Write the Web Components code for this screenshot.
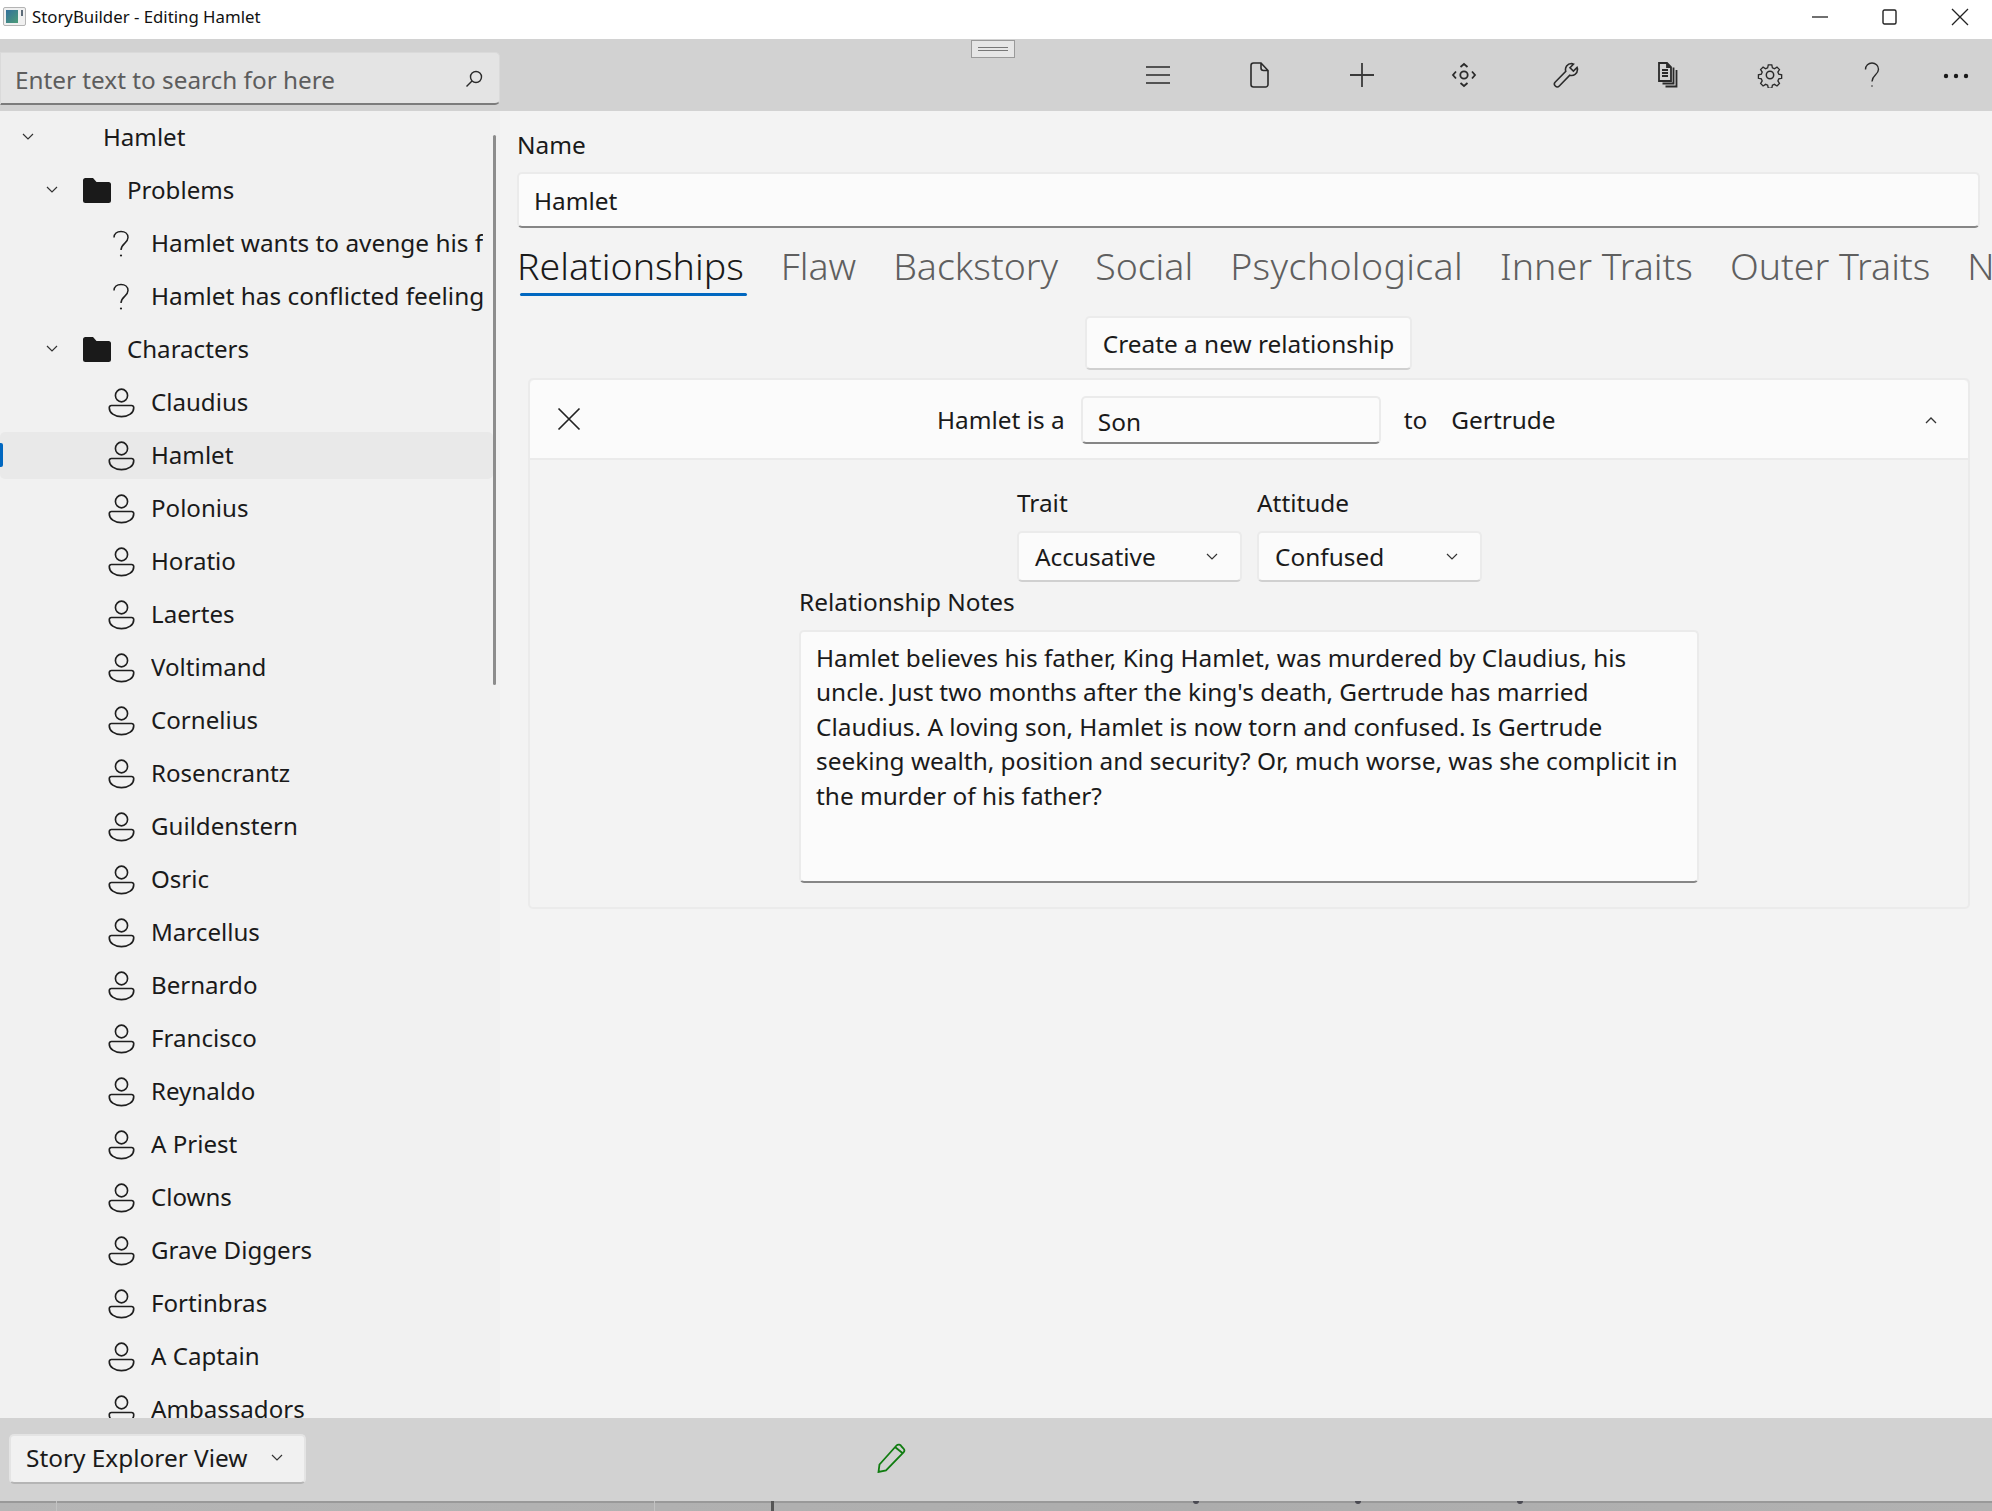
<!DOCTYPE html>
<html>
<head>
<meta charset="utf-8">
<title>StoryBuilder</title>
<style>
  html, body { margin: 0; height: 100%; overflow: hidden; background: #f3f3f3; }
  body { font-family: "Noto Sans", "Open Sans", sans-serif; color: #1a1a1a; }
</style>
</head>
<body>
<story-app></story-app>
<script>
(function initStoryBuilder() {
  const FONT = `"Noto Sans", "Open Sans", sans-serif`;
  const CHEVRON_DOWN = `<svg width="14" height="9" viewBox="0 0 14 9" fill="none" stroke="currentColor" stroke-width="1.2"><path d="M2 2l5 5 5-5"/></svg>`;

  const ICONS = {
    menu: `<svg width="26" height="26" viewBox="0 0 26 26" stroke="#2a2a2a" stroke-width="1.6"><path d="M1 5h24M1 13h24M1 21h24"/></svg>`,
    file: `<svg width="26" height="26" viewBox="0 0 26 26" fill="none" stroke="#2a2a2a" stroke-width="1.6"><path d="M6.5 1h7.5l7 7.5v14a2.5 2.5 0 0 1-2.5 2.5h-12A2.5 2.5 0 0 1 4 22.5V3.5A2.5 2.5 0 0 1 6.5 1zM14 1.5v4.5a2.5 2.5 0 0 0 2.5 2.5h4"/></svg>`,
    plus: `<svg width="26" height="26" viewBox="0 0 26 26" stroke="#3a3a3a" stroke-width="1.8"><path d="M1 13h24M13 1v24"/></svg>`,
    move: `<svg width="26" height="26" viewBox="0 0 26 26" fill="none" stroke="#2a2a2a" stroke-width="1.8"><circle cx="13" cy="13" r="3.7"/><path d="M9.5 5l3.5-3 3.5 3M9.5 21l3.5 3 3.5-3M5 9.5L2 13l3 3.5M21 9.5l3 3.5-3 3.5"/></svg>`,
    wrench: `<svg width="26" height="26" viewBox="0 0 26 26" fill="none" stroke="#2a2a2a" stroke-width="1.6"><path d="M18.5 1.5a6 6 0 0 0-5.7 7.9L2.3 20a2.8 2.8 0 0 0 4 4L16.8 13.2A6 6 0 0 0 24.5 7.5a6 6 0 0 0-.4-2l-3.7 3.6-3.4-3.3 3.6-3.7a6 6 0 0 0-2.1-.6z"/></svg>`,
    docs: `<svg width="26" height="26" viewBox="0 0 26 26" fill="none" stroke="#2a2a2a" stroke-width="1.8"><path d="M4 1h8l4 4v14H4zM12 1v4h4M7 8h6M7 11h6M7 14h6M18.5 5.5V21.5H7.5M21.5 8V24.5H10.5"/></svg>`,
    gear: `<svg width="26" height="26" viewBox="0 0 26 26" fill="none" stroke="#2a2a2a" stroke-width="1.5"><circle cx="13" cy="13" r="3.7"/><path d="M11 1.5h4l.7 3.3 2.3 1 2.9-1.800 2.800 2.800-1.800 2.900 1 2.300 3.300.7v4l-3.300.7-1 2.300 1.800 2.900-2.800 2.800-2.900-1.800-2.300 1-.7 3.300h-4l-.7-3.300-2.300-1-2.900 1.800-2.800-2.800 1.800-2.900-1-2.300-3.300-.7v-4l3.300-.7 1-2.300-1.800-2.900 2.800-2.800 2.900 1.800 2.300-1z" transform="translate(1.6 1.6) scale(.88)"/></svg>`,
    help: `<svg width="26" height="26" viewBox="0 0 26 26" fill="none" stroke="#2a2a2a" stroke-width="1.4"><path d="M6.5 7.5C6.5 3.5 9.5 1 13 1s6.5 2.6 6.5 6.2c0 5.8-6.5 6-6.5 12.3"/><circle cx="13" cy="24" r=".8" fill="#2a2a2a" stroke="none"/></svg>`,
    more: `<svg width="26" height="26" viewBox="0 0 26 26" fill="#1a1a1a"><circle cx="3" cy="14" r="2.2"/><circle cx="13" cy="14" r="2.2"/><circle cx="23" cy="14" r="2.2"/></svg>`
  };

  const TREE_ICONS = {
    folder: `<svg width="28" height="25" viewBox="0 0 28 25" fill="#1a1a1a"><path d="M2.5 0h7.500l3.500 4h12a2.500 2.500 0 0 1 2.500 2.500V22.500A2.500 2.500 0 0 1 25.500 25h-23A2.500 2.500 0 0 1 0 22.500V2.500A2.500 2.500 0 0 1 2.500 0z"/></svg>`,
    person: `<svg width="27" height="30" viewBox="0 0 28 30" preserveAspectRatio="none" fill="none" stroke="#1f1f1f" stroke-width="1.7"><circle cx="14" cy="7.5" r="6.3"/><path d="M3.5 17.5h21a2.2 2.2 0 0 1 2.2 2.2c0 5.200-5.500 9-12.700 9s-12.700-3.800-12.700-9a2.200 2.200 0 0 1 2.200-2.200z"/></svg>`,
    problem: `<svg width="28" height="28" viewBox="0 0 28 28" fill="none" stroke="#1f1f1f" stroke-width="1.5"><path d="M7 7.5C7 3.6 10 1.5 14 1.5s7 2.4 7 6c0 5.8-7 6-7 12.500"/><circle cx="14" cy="25.5" r="1.1" fill="#1f1f1f" stroke="none"/></svg>`
  };

  class TitleBar extends HTMLElement {
    constructor() {
      super();
      this.attachShadow({ mode: "open" });
      this.shadowRoot.innerHTML = `
        <style>
          :host { display: flex; align-items: center; box-sizing: border-box; height: 39px; padding-bottom: 6px; background: #fff; font: 16.8px ${FONT}; color: #111; }
          .app-icon { width: 23px; height: 19px; margin: 0 6px 0 3px; border: 1px solid #b4b4b4; border-radius: 2px; box-sizing: border-box; background: linear-gradient(135deg, #33709c, #4c9c78) 2px 2px / 12px 13px no-repeat, linear-gradient(#5c6b78, #5c6b78) 17px 2px / 2px 6px no-repeat, #f0f0f0; }
          .title { flex: 1; }
          .ctrl { width: 70px; display: flex; align-items: center; justify-content: center; }
        </style>
        <div class="app-icon"></div>
        <div class="title"><slot></slot></div>
        <div class="ctrl"><svg width="16" height="16" viewBox="0 0 16 16" stroke="#222" stroke-width="1.3"><path d="M0 8h16"/></svg></div>
        <div class="ctrl"><svg width="16" height="16" viewBox="0 0 16 16" fill="none" stroke="#222" stroke-width="1.4"><rect x="1" y="1" width="13" height="14" rx="1.5"/></svg></div>
        <div class="ctrl" style="margin-right:-3px"><svg width="18" height="18" viewBox="0 0 18 18" stroke="#222" stroke-width="1.3"><path d="M1 1l16 16M17 1L1 17"/></svg></div>
      `;
    }
  }
  customElements.define("title-bar", TitleBar);

  class ToolButton extends HTMLElement {
    constructor() {
      super();
      this.attachShadow({ mode: "open" });
      this.shadowRoot.innerHTML = `
        <style>
          :host { display: flex; width: 102px; height: 72px; align-items: center; justify-content: center; }
          :host([last]) { width: 66px; margin-right: 3px; }
        </style>
        ${ICONS[this.getAttribute("icon")] || ""}
      `;
    }
  }
  customElements.define("tool-button", ToolButton);

  class SearchBox extends HTMLElement {
    constructor() {
      super();
      this.attachShadow({ mode: "open" });
      this.shadowRoot.innerHTML = `
        <style>
          :host { display: flex; align-items: center; justify-content: space-between; box-sizing: border-box; width: 500px; height: 53px; padding: 2px 16px 0 14px; background: #e4e4e4; border: 1px solid #dadada; border-bottom: 2px solid #7c7c7c; border-radius: 0 5px 5px 0; font-size: 24.3px; color: #5d5d5d; }
        </style>
        <span>${this.getAttribute("placeholder")}</span>
        <svg width="18" height="18" viewBox="0 0 18 18" fill="none" stroke="#2a2a2a" stroke-width="1.4"><circle cx="11" cy="7" r="5.5"/><path d="M7 11l-5.5 5.5"/></svg>
      `;
    }
  }
  customElements.define("search-box", SearchBox);

  class TreeItem extends HTMLElement {
    constructor() {
      super();
      this.attachShadow({ mode: "open" });
      const level = Number(this.getAttribute("level") || 0);
      const icon = this.getAttribute("icon");
      const expand = this.hasAttribute("expandable");
      this.shadowRoot.innerHTML = `
        <style>
          :host { display: block; box-sizing: border-box; height: 53px; padding: 3px 0; }
          .row { position: relative; display: flex; align-items: center; height: 47px; border-radius: 5px; font-size: 24.1px; color: #1a1a1a; white-space: nowrap; overflow: hidden; padding-left: ${level * 24}px; }
          :host([icon="problem"]) .row { font-size: 24.4px; }
          :host([selected]) .row { background: #e9e9e9; }
          :host([selected]) .row::before { content: ""; position: absolute; left: 0; top: 11px; width: 3px; height: 24px; background: #0067c0; border-radius: 0 2px 2px 0; }
          .chev { width: 56px; flex: none; display: flex; justify-content: center; color: #333; padding-bottom: 3px; }
          .icon { width: 28px; height: 30px; flex: none; display: flex; align-items: center; justify-content: center; margin-right: 16px; margin-left: 3px; }
          .icon.none { visibility: hidden; }
          .text { flex: 1; min-width: 0; overflow: hidden; margin-right: 10px; padding-bottom: 2px; }
        </style>
        <div class="row">
          <div class="chev">${expand ? CHEVRON_DOWN : ""}</div>
          <div class="icon ${icon ? "" : "none"}">${TREE_ICONS[icon] || ""}</div>
          <div class="text"><slot></slot></div>
        </div>
      `;
    }
  }
  customElements.define("tree-item", TreeItem);

  class TreePane extends HTMLElement {
    constructor() {
      super();
      this.attachShadow({ mode: "open" });
      this.shadowRoot.innerHTML = `
        <style>
          :host { display: block; position: relative; width: 500px; background: #f1f1f1; overflow: hidden; }
          .list { width: 493px; }
          .thumb { position: absolute; left: 493px; top: 24px; width: 3px; height: 550px; border-radius: 2px; background: #8c8c8c; }
        </style>
        <div class="list"><slot></slot></div>
        <div class="thumb"></div>
      `;
    }
  }
  customElements.define("tree-pane", TreePane);

  class FieldBox extends HTMLElement {
    constructor() {
      super();
      this.attachShadow({ mode: "open" });
      this.shadowRoot.innerHTML = `
        <style>
          :host { display: flex; align-items: center; box-sizing: border-box; padding: 0 15px; background: #fbfbfb; border: 2px solid #ebebeb; border-bottom: 2px solid #868686; border-radius: 5px; font-size: 24.4px; color: #1a1a1a; }
        </style>
        <slot></slot>
      `;
    }
  }
  customElements.define("field-box", FieldBox);

  class ComboBox extends HTMLElement {
    constructor() {
      super();
      this.attachShadow({ mode: "open" });
      this.shadowRoot.innerHTML = `
        <style>
          :host { display: flex; align-items: center; justify-content: space-between; box-sizing: border-box; height: 51px; padding: 0 21px 0 16px; background: #fbfbfb; border: 2px solid #ebebeb; border-bottom-color: #d0d0d0; border-radius: 5px; font-size: 24.4px; color: #1a1a1a; }
          .chev { display: flex; color: #333; }
        </style>
        <span><slot></slot></span><span class="chev">${CHEVRON_DOWN}</span>
      `;
    }
  }
  customElements.define("combo-box", ComboBox);

  class TabStrip extends HTMLElement {
    constructor() {
      super();
      this.attachShadow({ mode: "open" });
      const tabs = ["Relationships", "Flaw", "Backstory", "Social", "Psychological", "Inner Traits", "Outer Traits", "N"];
      this.shadowRoot.innerHTML = `
        <style>
          :host { display: flex; height: 66px; overflow: hidden; gap: 37px; white-space: nowrap; font-size: 37.5px; font-weight: 300; color: #5f5f5f; }
          .tab { position: relative; height: 66px; line-height: 68px; flex: none; }
          .tab.wide { letter-spacing: .35px; }
          .tab.on { color: #1a1a1a; }
          .tab.on::after { content: ""; position: absolute; left: 3px; right: -3px; top: 61px; height: 3px; background: #0067c0; border-radius: 2px; }
        </style>
        ${tabs.map((t, i) => `<div class="tab ${i === 0 ? "on" : ""} ${i === 4 ? "wide" : ""}">${t}</div>`).join("")}
      `;
    }
  }
  customElements.define("tab-strip", TabStrip);

  class RelationCard extends HTMLElement {
    constructor() {
      super();
      this.attachShadow({ mode: "open" });
      this.shadowRoot.innerHTML = `
        <style>
          :host { display: block; box-sizing: border-box; height: 531px; margin: 0 10px 0 11px; border: 2px solid #ebebeb; border-radius: 5px; background: #f3f3f3; font-size: 24.4px; }
          .head { display: flex; align-items: center; height: 80px; padding-top: 1px; box-sizing: border-box; background: #fbfbfb; border-bottom: 2px solid #ebebeb; border-radius: 5px 5px 0 0; position: relative; }
          .close { position: absolute; left: 27px; top: 27px; display: flex; }
          .up { position: absolute; right: 30px; top: 36px; display: flex; color: #333; }
          .who { margin-left: 407px; }
          field-box { width: 300px; height: 48px; margin: 0 23px 0 16px; padding-top: 4px; }
          .gert { margin-left: 24px; }
          .traits { display: flex; gap: 15px; margin: 25px 0 0 487px; }
          .col { width: 225px; }
          .lab { height: 46px; line-height: 36px; }
          .notes { margin: 5px 0 0 269px; width: 900px; }
          .notes .lab { height: 43px; line-height: 30px; }
          .note-box { display: block; height: 253px; box-sizing: border-box; padding: 9px 15px; line-height: 34.4px; }
        </style>
        <div class="head">
          <div class="close"><svg width="24" height="24" viewBox="0 0 24 24" stroke="#222" stroke-width="1.7"><path d="M1.5 1.5l21 21M22.5 1.5l-21 21"/></svg></div>
          <div class="who">Hamlet is a</div>
          <field-box>Son</field-box>
          <div>to</div>
          <div class="gert">Gertrude</div>
          <div class="up"><svg width="14" height="9" viewBox="0 0 14 9" fill="none" stroke="currentColor" stroke-width="1.3"><path d="M2 7l5-5 5 5"/></svg></div>
        </div>
        <div class="traits">
          <div class="col"><div class="lab">Trait</div><combo-box>Accusative</combo-box></div>
          <div class="col"><div class="lab">Attitude</div><combo-box>Confused</combo-box></div>
        </div>
        <div class="notes">
          <div class="lab">Relationship Notes</div>
          <field-box class="note-box" style="display:block;width:auto;margin:0">Hamlet believes his father, King Hamlet, was murdered by Claudius, his<br>uncle. Just two months after the king's death, Gertrude has married<br>Claudius. A loving son, Hamlet is now torn and confused. Is Gertrude<br>seeking wealth, position and security? Or, much worse, was she complicit in<br>the murder of his father?</field-box>
        </div>
      `;
    }
  }
  customElements.define("relation-card", RelationCard);

  class CharacterPane extends HTMLElement {
    constructor() {
      super();
      this.attachShadow({ mode: "open" });
      this.shadowRoot.innerHTML = `
        <style>
          :host { display: block; flex: 1; min-width: 0; box-sizing: border-box; padding: 16px 12px 0 17px; background: #f3f3f3; font-size: 24.4px; color: #1a1a1a; overflow: hidden; }
          .lab { height: 45px; line-height: 36px; }
          field-box { height: 56px; }
          tab-strip { margin-top: 4px; margin-right: -12px; }
          .new { display: flex; justify-content: center; margin: 18px 0 8px; }
          .btn { display: flex; align-items: center; justify-content: center; box-sizing: border-box; width: 327px; height: 54px; background: #fbfbfb; border: 2px solid #ebebeb; border-bottom-color: #d0d0d0; border-radius: 5px; }
        </style>
        <div class="lab">Name</div>
        <field-box>Hamlet</field-box>
        <tab-strip></tab-strip>
        <div class="new"><div class="btn">Create a new relationship</div></div>
        <relation-card></relation-card>
      `;
    }
  }
  customElements.define("character-pane", CharacterPane);

  class StoryApp extends HTMLElement {
    constructor() {
      super();
      this.attachShadow({ mode: "open" });
      const people = ["Claudius", "Hamlet", "Polonius", "Horatio", "Laertes", "Voltimand", "Cornelius", "Rosencrantz", "Guildenstern", "Osric", "Marcellus", "Bernardo", "Francisco", "Reynaldo", "A Priest", "Clowns", "Grave Diggers", "Fortinbras", "A Captain", "Ambassadors"];
      const tools = ["menu", "file", "plus", "move", "wrench", "docs", "gear", "help"];
      this.shadowRoot.innerHTML = `
        <style>
          :host { display: flex; flex-direction: column; width: 1992px; height: 1511px; overflow: hidden; font-family: ${FONT}; }
          .tools { position: relative; display: flex; align-items: center; height: 72px; flex: none; background: #d2d2d2; }
          search-box { align-self: flex-start; margin-top: 13px; }
          .spacer { flex: 1; }
          .handle { position: absolute; left: 971px; top: 1px; width: 44px; height: 18px; box-sizing: border-box; background: #e6e6e6; border: 1px solid #9a9a9a; display: flex; align-items: center; justify-content: center; }
          .handle::after { content: ""; width: 30px; height: 4px; box-sizing: border-box; border-top: 1px solid #777; border-bottom: 1px solid #777; }
          .mid { display: flex; flex: 1; min-height: 0; }
          .foot { display: flex; align-items: center; height: 83px; flex: none; background: #d2d2d2; box-sizing: border-box; padding: 0 0 2px 9px; }
          .foot combo-box { width: 297px; height: 50px; background: #f1f1f1; padding: 0 20px 2px 15px; border-color: #e4e4e4; border-bottom-color: #b5b5b5; }
          .pencil { display: flex; margin: 0 0 2px 571px; }
          .desk { position: relative; height: 10px; flex: none; background: linear-gradient(90deg, #b6b6b6, #adadad 60%, #b2b2b2); border-top: 2px solid #999; box-sizing: border-box; }
          .desk i { position: absolute; top: -2px; bottom: 0; width: 1px; background: #c2c2c2; }
          .desk i.dark { width: 3px; background: #555; }
          .desk i.dot { height: 3px; width: 6px; bottom: auto; background: #4a4a52; border-radius: 0 0 3px 3px; }
        </style>
        <title-bar>StoryBuilder - Editing Hamlet</title-bar>
        <div class="tools">
          <search-box placeholder="Enter text to search for here"></search-box>
          <div class="spacer"></div>
          ${tools.map(t => `<tool-button icon="${t}"></tool-button>`).join("")}
          <tool-button icon="more" last></tool-button>
          <div class="handle"></div>
        </div>
        <div class="mid">
          <tree-pane>
            <tree-item level="0" expandable>Hamlet</tree-item>
            <tree-item level="1" expandable icon="folder">Problems</tree-item>
            <tree-item level="2" icon="problem">Hamlet wants to avenge his father</tree-item>
            <tree-item level="2" icon="problem">Hamlet has conflicted feelings</tree-item>
            <tree-item level="1" expandable icon="folder">Characters</tree-item>
            ${people.map((p, i) => `<tree-item level="2" icon="person" ${i === 1 ? "selected" : ""}>${p}</tree-item>`).join("")}
          </tree-pane>
          <character-pane></character-pane>
        </div>
        <div class="foot">
          <combo-box>Story Explorer View</combo-box>
          <div class="pencil"><svg width="30" height="30" viewBox="0 0 30 30" fill="none" stroke="#107c10" stroke-width="1.8"><path d="M2.5 21.5L19.5 2.5a3 3 0 0 1 5 1l2 2a3 3 0 0 1 0 4L9 27.5 1.5 29zM18 4l8 6.5"/></svg></div>
        </div>
        <div class="desk">
          <i style="left:56px"></i><i style="left:654px"></i><i class="dark" style="left:771px"></i>
          <i class="dot" style="left:1193px"></i><i class="dot" style="left:1355px"></i><i class="dot" style="left:1517px"></i>
        </div>
      `;
    }
  }
  customElements.define("story-app", StoryApp);
})();
</script>
</body>
</html>
